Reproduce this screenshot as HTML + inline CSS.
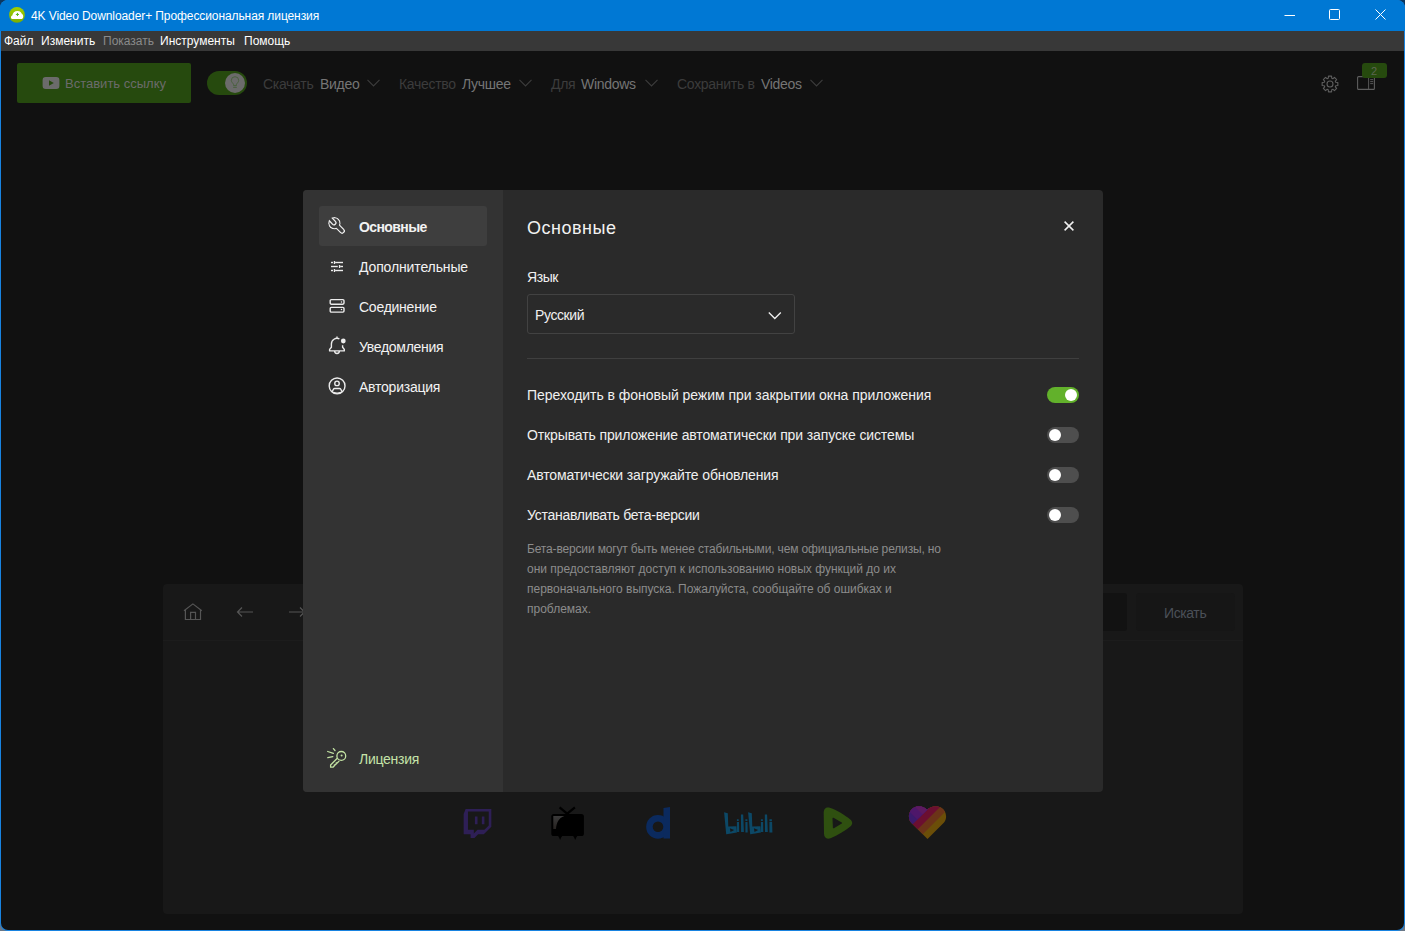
<!DOCTYPE html>
<html><head><meta charset="utf-8">
<style>
*{margin:0;padding:0;box-sizing:border-box}
html,body{width:1405px;height:931px;overflow:hidden;background:linear-gradient(#0c3760,#0c3760 40px,#6a7888 890px);font-family:"Liberation Sans",sans-serif}
.a{position:absolute}
#win{position:absolute;left:0;top:0;width:1405px;height:931px;background:#1883e0;border-radius:8px;overflow:hidden}
#title{position:absolute;left:0;top:0;width:1405px;height:31px;background:#0078d4;color:#fff}
#menu{position:absolute;left:1px;top:31px;width:1403px;height:20px;background:#383838;color:#fff;font-size:12px}
#main{position:absolute;left:1px;top:51px;width:1403px;height:879px;background:#111111;border-radius:0 0 7px 7px}
.t{position:absolute;white-space:nowrap;line-height:1}
.tb{font-size:14px;letter-spacing:-0.3px}
.lbl{color:#3c3c3c}
.val{color:#757575}
.side{font-size:14px;color:#f2f2f2;letter-spacing:-0.25px}
.row{font-size:14px;color:#f0f0f0;left:527px}
.tog{position:absolute;left:1047px;width:32px;height:16px;border-radius:8px;background:#4e4e4e}
.tog::after{content:"";position:absolute;left:2px;top:2px;width:12px;height:12px;border-radius:50%;background:#fff}
.tog.on{background:#62b12b}
.tog.on::after{left:18px}
</style></head><body>
<div id="win">
  <div id="title">
    <svg class="a" style="left:9px;top:7px" width="16" height="16" viewBox="0 0 16 16"><defs><linearGradient id="cg" x1="0" y1="0" x2="0" y2="1"><stop offset="0" stop-color="#a2d000"/><stop offset="1" stop-color="#7cae00"/></linearGradient></defs><circle cx="7.95" cy="7.9" r="7.9" fill="url(#cg)"/><path d="M3.2 11.9C1.6 11.9 1.6 8.7 3.3 8.5C3.8 6 5.4 4 8.5 4C11.3 4 12.5 5.9 12.9 7.1C14.7 7.4 14.7 11.9 13 11.9Z" fill="#fff"/><path d="M8.46 5.9v3.1M6.9 7.45h3.1" stroke="#5cb81c" stroke-width="1"/></svg>
    <div class="t" style="left:31px;top:10px;font-size:12px;letter-spacing:-0.09px">4K Video Downloader+ Профессиональная лицензия</div>
    <svg class="a" style="left:1284px;top:10px" width="12" height="12"><path d="M0.5 5.5h10.5" stroke="#fff" stroke-width="1"/></svg>
    <svg class="a" style="left:1329px;top:9px" width="12" height="12"><rect x="0.5" y="0.5" width="10" height="10" rx="1" fill="none" stroke="#fff" stroke-width="1"/></svg>
    <svg class="a" style="left:1375px;top:9px" width="12" height="12"><path d="M0.5 0.5l10 10M10.5 0.5l-10 10" stroke="#fff" stroke-width="1"/></svg>
  </div>
  <div id="menu">
    <div class="t" style="left:3px;top:4px">Файл</div>
    <div class="t" style="left:40px;top:4px">Изменить</div>
    <div class="t" style="left:102px;top:4px;color:#8a8a8a">Показать</div>
    <div class="t" style="left:159px;top:4px">Инструменты</div>
    <div class="t" style="left:243px;top:4px">Помощь</div>
  </div>
  <div id="main"></div>

  <!-- toolbar -->
  <div class="a" style="left:17px;top:63px;width:174px;height:40px;background:#264a0e;border-radius:2px"></div>
  <svg class="a" style="left:42px;top:77px" width="18" height="12" viewBox="0 0 18 12"><rect x="0.6" y="0" width="16.8" height="12" rx="3" fill="#6b6b6b"/><path d="M7 3.2v5.6l4.8-2.8z" fill="#264a0e"/></svg>
  <div class="t" style="left:65px;top:77px;font-size:13px;color:#6b6b6b">Вставить ссылку</div>
  <div class="a" style="left:207px;top:71px;width:40px;height:24px;border-radius:12px;background:#264a0e"></div>
  <div class="a" style="left:225px;top:73px;width:20px;height:20px;border-radius:50%;background:#6b6b6b"></div>
  <svg class="a" style="left:229px;top:75px" width="12" height="14" viewBox="0 0 12 14"><path d="M4.6 10.6V9.6C4.6 8.6 2.3 7.4 2.3 5.4A3.7 3.7 0 0 1 9.7 5.4C9.7 7.4 7.4 8.6 7.4 9.6V10.6Z" fill="none" stroke="#46613a" stroke-width="0.9" stroke-linejoin="round"/><path d="M4.2 12.4h3.6" stroke="#46613a" stroke-width="0.9"/></svg>

  <div class="t tb lbl" style="left:263px;top:77px">Скачать</div>
  <div class="t tb val" style="left:320px;top:77px">Видео</div>
  <svg class="a" style="left:367px;top:79px" width="13" height="8"><path d="M0.5 0.8l6 6 6-6" fill="none" stroke="#3c3c3c" stroke-width="1.2"/></svg>
  <div class="t tb lbl" style="left:399px;top:77px">Качество</div>
  <div class="t tb val" style="left:462px;top:77px">Лучшее</div>
  <svg class="a" style="left:519px;top:79px" width="13" height="8"><path d="M0.5 0.8l6 6 6-6" fill="none" stroke="#3c3c3c" stroke-width="1.2"/></svg>
  <div class="t tb lbl" style="left:551px;top:77px">Для</div>
  <div class="t tb val" style="left:581px;top:77px">Windows</div>
  <svg class="a" style="left:645px;top:79px" width="13" height="8"><path d="M0.5 0.8l6 6 6-6" fill="none" stroke="#3c3c3c" stroke-width="1.2"/></svg>
  <div class="t tb lbl" style="left:677px;top:77px">Сохранить в</div>
  <div class="t tb val" style="left:761px;top:77px">Videos</div>
  <svg class="a" style="left:810px;top:79px" width="13" height="8"><path d="M0.5 0.8l6 6 6-6" fill="none" stroke="#3c3c3c" stroke-width="1.2"/></svg>

  <svg class="a" style="left:1319.5px;top:73.8px" width="20" height="20" viewBox="0 0 20 20"><path d="M8.25 4.26L8.47 2.15L11.53 2.15L11.75 4.26L12.82 4.70L14.47 3.37L16.63 5.53L15.30 7.18L15.74 8.25L17.85 8.47L17.85 11.53L15.74 11.75L15.30 12.82L16.63 14.47L14.47 16.63L12.82 15.30L11.75 15.74L11.53 17.85L8.47 17.85L8.25 15.74L7.18 15.30L5.53 16.63L3.37 14.47L4.70 12.82L4.26 11.75L2.15 11.53L2.15 8.47L4.26 8.25L4.70 7.18L3.37 5.53L5.53 3.37L7.18 4.70Z" fill="none" stroke="#5e5e5e" stroke-width="1.1" stroke-linejoin="round"/><circle cx="10" cy="10" r="3" fill="none" stroke="#5e5e5e" stroke-width="1.1"/></svg>
  <svg class="a" style="left:1356px;top:75px" width="20" height="16" viewBox="0 0 20 16"><rect x="1.6" y="1.6" width="16.8" height="12.8" rx="1" fill="none" stroke="#5e5e5e" stroke-width="1.1"/><path d="M12.6 1.6v12.8M14.2 4.6h3M14.2 6.6h3M14.2 8.6h3" stroke="#5e5e5e" stroke-width="0.9"/></svg>
  <div class="a" style="left:1362px;top:63px;width:25px;height:15px;border-radius:3px;background:#264a0e"></div>
  <div class="t" style="left:1371px;top:66px;font-size:11px;color:#5c6652">2</div>

  <!-- background browser panel -->
  <div class="a" style="left:163px;top:584px;width:1080px;height:330px;background:#181818;border-radius:4px"></div>
  <div class="a" style="left:163px;top:640px;width:1080px;height:1px;background:#1c1c1c"></div>
  <svg class="a" style="left:183px;top:602px" width="20" height="19" viewBox="0 0 20 19"><path d="M1 8.8L9.9 1.9L18.8 8.8M2.4 7.8V17.5H17.5V7.8M7.6 17.5V10.4H12.5V17.5" fill="none" stroke="#555" stroke-width="1.2"/></svg>
  <svg class="a" style="left:236px;top:606px" width="18" height="12" viewBox="0 0 18 12"><path d="M17 6H1.5M6 1.5L1.5 6 6 10.5" fill="none" stroke="#555" stroke-width="1.2"/></svg>
  <svg class="a" style="left:288px;top:606px" width="18" height="12" viewBox="0 0 18 12"><path d="M1 6h15.5M12 1.5L16.5 6 12 10.5" fill="none" stroke="#555" stroke-width="1.2"/></svg>
  <div class="a" style="left:1000px;top:593px;width:127px;height:38px;background:#121212;border-radius:3px"></div>
  <div class="a" style="left:1136px;top:593px;width:99px;height:38px;background:#161616;border-radius:4px"></div>
  <div class="t" style="left:1164px;top:606px;font-size:14px;letter-spacing:-0.4px;color:#4b5058">Искать</div>

  <!-- service icons -->
  <svg class="a" style="left:463px;top:809px" width="29" height="29" viewBox="0 0 24 24"><g transform="translate(0,0) scale(1.2)" fill="#2e1f56"><path d="M2.149 0l-1.612 4.119v16.836h5.731v3.045h3.224l3.045-3.045h4.657l6.269-6.269v-14.686h-21.314zm19.164 13.612l-3.582 3.582h-5.731l-3.045 3.045v-3.045h-4.836v-15.045h17.194v11.463zm-3.582-7.343v6.262h-2.149v-6.262h2.149zm-5.731 0v6.262h-2.149v-6.262h2.149z" transform="scale(0.8333)"/></g></svg>
  <svg class="a" style="left:551px;top:806px" width="33" height="35" viewBox="0 0 33 35"><defs><linearGradient id="tg" x1="0" y1="0" x2="0" y2="1"><stop offset="0" stop-color="#3a3a3a"/><stop offset="1" stop-color="#262220"/></linearGradient></defs><path d="M8.6 1.3l7.6 6.4 7.7-6.4" fill="none" stroke="#000" stroke-width="2.2"/><rect x="0.3" y="8" width="32.6" height="22" rx="2.6" fill="#000"/><path d="M6.8 29.5h4.8Q10 31 9.1 34Q8.2 31 6.8 29.5zM21.8 29.5h4.8Q25.2 31 24.2 34Q23.3 31 21.8 29.5z" fill="#000"/><path d="M2.3 10h11C7.5 12 5.5 17 5 23H2.3Z" fill="url(#tg)"/></svg>
  <svg class="a" style="left:645px;top:807px" width="26" height="33" viewBox="0 0 26 33" fill="#0b2a5e"><circle cx="12.96" cy="19.9" r="11.8"/><path d="M18.5 1L25 0V31.6H18.5Z"/><circle cx="13" cy="19.8" r="5.3" fill="#181818"/></svg>
  <svg class="a" style="left:720px;top:808px" width="56" height="30" viewBox="0 0 56 30" fill="#0c4866"><path fill-rule="evenodd" d="M4.1 4.3L7.8 5.3L8.3 18.4L16.4 18.2L16.9 24.6L6.6 26.3L6.2 26.2ZM9.9 20.3L14.2 21.9L10.5 24Z"/><path d="M16.9 11.2h1.8v1.8h-1.8zM16.9 13.9h2.1l.2 10.2h-2.3zM20.9 6.4h2.3l.7 17.6h-2.8zM25.4 11.2h2v1.8h-2zM25.4 13.9h2.1l.2 10.7h-2.3zM40.9 11.2h2v1.8h-2zM40.9 13.9h2.2l.2 10.2h-2.4zM44.8 6.4h2.3l.7 17.6h-2.8zM49.4 11.2h2.5v2.1h-2.5zM49.4 13.9h2.7l.3 10.7h-3z"/><path fill-rule="evenodd" d="M28.1 4.3L31.8 5.3L32.3 18.4L40.4 18.2L40.9 24.6L30.6 26.3L30.2 26.2ZM33.9 20.3L38.2 21.9L34.5 24Z"/></svg>
  <svg class="a" style="left:823px;top:807px" width="30" height="33" viewBox="0 0 30 33"><path d="M6 0.6C2.2 -0.2 0.6 2.6 0.7 6.5L1 26.5C1.1 30.8 3.6 32.5 7.5 31.2C15 28.3 22 24 27.3 19.6C29.8 17.5 29.8 14.6 27.3 12.6C22 8.3 14 3.2 6 0.6Z" fill="#2f5010"/><path d="M10.2 11.4L18.4 16L10.6 20.6Z" fill="#181818" stroke="#181818" stroke-width="1.4" stroke-linejoin="round"/></svg>
  <svg class="a" style="left:908px;top:805px" width="39" height="35" viewBox="0 0 39 35"><defs><clipPath id="hc"><path d="M19.5 34L3.2 17.8C-0.5 14 0 5.5 6.5 2.3c4.5-2 9.5-.6 12.6 2.4 3.4-3.2 8.6-4.6 13.2-2.4C39 5.5 39.5 14 35.8 17.8z"/></clipPath></defs><g clip-path="url(#hc)"><rect x="-10" y="-10" width="60" height="60" fill="#6b4e08"/><path d="M-10 -10H54L-10 54Z" fill="#6b3418"/><path d="M-10 -10H44L-10 44Z" fill="#6b0f30"/><path d="M-10 -10H34L-10 34Z" fill="#3b1a6c"/><path d="M-15.2 -10H34L9.4 14.6Z" fill="#4e176a"/><path d="M-4.8 -10H34L14.6 9.4Z" fill="#5c1a60"/></g></svg>

  <!-- dialog -->
  <div class="a" style="left:303px;top:190px;width:800px;height:602px;background:#2a2a2a;border-radius:4px;overflow:hidden">
    <div class="a" style="left:0;top:0;width:200px;height:602px;background:#333333"></div>
  </div>
  <div class="a" style="left:319px;top:206px;width:168px;height:40px;background:#3e3e3e;border-radius:3px"></div>

  <!-- sidebar icons -->
  <svg class="a" style="left:324px;top:212px" width="26" height="26" viewBox="0 0 26 26"><defs>
    <clipPath id="wc"><circle cx="10.4" cy="11.24" r="6.25"/><path d="M12.465 9.175L20.105 16.815A2.92 2.92 0 0 1 15.975 20.945L8.335 13.305Z"/></clipPath>
    <mask id="wm" maskUnits="userSpaceOnUse" x="0" y="0" width="26" height="26">
      <circle cx="10.4" cy="11.24" r="6.25" fill="#fff"/><path d="M10.4 11.24L18.04 18.88" stroke="#fff" stroke-width="5.84" stroke-linecap="round"/>
      <circle cx="10.4" cy="11.24" r="4.95" fill="#000"/><path d="M10.4 11.24L18.04 18.88" stroke="#000" stroke-width="3.24" stroke-linecap="round"/>
      <path d="M0 0L9.9 10.74" stroke="#fff" stroke-width="5.3" stroke-linecap="round"/>
      <path d="M0 0L9.9 10.74" stroke="#000" stroke-width="2.7" stroke-linecap="round"/>
    </mask></defs>
    <g clip-path="url(#wc)"><rect width="26" height="26" fill="#ececec" mask="url(#wm)"/></g></svg>
  <svg class="a" style="left:326px;top:256px" width="22" height="22" viewBox="0 0 22 22" fill="#ececec"><rect x="5" y="5.8" width="2" height="1.4"/><rect x="7.8" y="5" width="1.3" height="3"/><rect x="9.1" y="5.8" width="7.9" height="1.4"/><rect x="5" y="9.8" width="6.8" height="1.4"/><rect x="12.9" y="9" width="1.3" height="3"/><rect x="14.2" y="9.8" width="2.8" height="1.4"/><rect x="5" y="13.8" width="2" height="1.4"/><rect x="7.8" y="13" width="1.3" height="3"/><rect x="9.1" y="13.8" width="7.9" height="1.4"/></svg>
  <svg class="a" style="left:326px;top:295px" width="22" height="22" viewBox="0 0 22 22"><rect x="4.2" y="4.6" width="13.8" height="4.6" rx="1.1" fill="none" stroke="#ececec" stroke-width="1.4"/><rect x="4.2" y="12.4" width="13.8" height="4.7" rx="1.1" fill="none" stroke="#ececec" stroke-width="1.4"/><circle cx="15.5" cy="7.1" r="0.75" fill="#ececec"/><circle cx="15.5" cy="14.5" r="0.75" fill="#ececec"/></svg>
  <svg class="a" style="left:325px;top:334px" width="25" height="25" viewBox="0 0 25 25"><path d="M14.4 4.9A5.6 5.6 0 0 0 6.4 10V13.3L4.6 15.4V16.9H19.3V15.4L17.6 13.3V11.3M9.6 17.1A2.4 2.4 0 0 0 14.4 17.1M12 2.4V4.4" fill="none" stroke="#ececec" stroke-width="1.4" stroke-linejoin="round"/><circle cx="18.3" cy="7" r="2.4" fill="#ececec"/></svg>
  <svg class="a" style="left:325px;top:374px" width="25" height="25" viewBox="0 0 25 25"><circle cx="12.1" cy="11.95" r="7.9" fill="none" stroke="#ececec" stroke-width="1.4"/><circle cx="12" cy="9.4" r="2.25" fill="none" stroke="#ececec" stroke-width="1.4"/><path d="M7.2 17.8L8.4 15.3Q8.8 14.5 9.8 14.5H14.4Q15.4 14.5 15.8 15.3L17 17.8M8.3 18.4Q12.1 19.8 16 18.4" fill="none" stroke="#ececec" stroke-width="1.4"/></svg>
  <svg class="a" style="left:324px;top:745px" width="26" height="26" viewBox="0 0 26 26"><circle cx="17.3" cy="10.9" r="4.4" fill="none" stroke="#c3e3a3" stroke-width="1.3"/><circle cx="17.6" cy="10.6" r="1" fill="#c3e3a3"/><path d="M13.3 13.3L6.6 20V22.2H9L10.4 20.8V19.8H11.4L12.2 19V18H13.2L15.3 15.9" fill="none" stroke="#c3e3a3" stroke-width="1.3" stroke-linejoin="round"/><path d="M9.4 3.6L11 5.5M3.7 6.5L9.4 8.4M3.8 12.6L8.8 11.6" stroke="#c3e3a3" stroke-width="1.3" stroke-linecap="round"/></svg>

  <div class="t side" style="left:359px;top:220px;font-weight:bold;letter-spacing:-0.6px">Основные</div>
  <div class="t side" style="left:359px;top:260px;letter-spacing:-0.13px">Дополнительные</div>
  <div class="t side" style="left:359px;top:300px">Соединение</div>
  <div class="t side" style="left:359px;top:340px;letter-spacing:-0.3px">Уведомления</div>
  <div class="t side" style="left:359px;top:380px;letter-spacing:-0.23px">Авторизация</div>
  <div class="t side" style="left:359px;top:752px;color:#c5e3a8;letter-spacing:-0.26px">Лицензия</div>

  <!-- content -->
  <div class="t" style="left:527px;top:219px;font-size:18px;color:#f2f2f2;letter-spacing:0.52px">Основные</div>
  <svg class="a" style="left:1063px;top:220px" width="12" height="12"><path d="M1.6 1.6l8.8 8.8M10.4 1.6l-8.8 8.8" stroke="#f0f0f0" stroke-width="1.5"/></svg>
  <div class="t" style="left:527px;top:270px;font-size:14px;color:#f0f0f0;letter-spacing:-0.43px">Язык</div>
  <div class="a" style="left:527px;top:294px;width:268px;height:40px;border:1px solid #424242;border-radius:3px"></div>
  <div class="t" style="left:535px;top:308px;font-size:14px;color:#f0f0f0;letter-spacing:-0.39px">Русский</div>
  <svg class="a" style="left:768.3px;top:310.8px" width="14" height="10"><path d="M0.8 1.5l6 6 6-6" fill="none" stroke="#f0f0f0" stroke-width="1.3"/></svg>
  <div class="a" style="left:527px;top:358px;width:552px;height:1px;background:#3f3f3f"></div>

  <div class="t row" style="top:388px;letter-spacing:-0.04px">Переходить в фоновый режим при закрытии окна приложения</div>
  <div class="t row" style="top:428px;letter-spacing:-0.12px">Открывать приложение автоматически при запуске системы</div>
  <div class="t row" style="top:468px;letter-spacing:-0.14px">Автоматически загружайте обновления</div>
  <div class="t row" style="top:508px;letter-spacing:-0.27px">Устанавливать бета-версии</div>
  <div class="tog on" style="top:387px"></div>
  <div class="tog" style="top:427px"></div>
  <div class="tog" style="top:467px"></div>
  <div class="tog" style="top:507px"></div>

  <div class="a" style="left:527px;top:539px;font-size:12px;line-height:20px;color:#8c8c8c;white-space:nowrap">
    <div style="letter-spacing:-0.157px">Бета-версии могут быть менее стабильными, чем официальные релизы, но</div>
    <div style="letter-spacing:-0.01px">они предоставляют доступ к использованию новых функций до их</div>
    <div style="letter-spacing:-0.02px">первоначального выпуска. Пожалуйста, сообщайте об ошибках и</div>
    <div>проблемах.</div>
  </div>
</div>
</body></html>
